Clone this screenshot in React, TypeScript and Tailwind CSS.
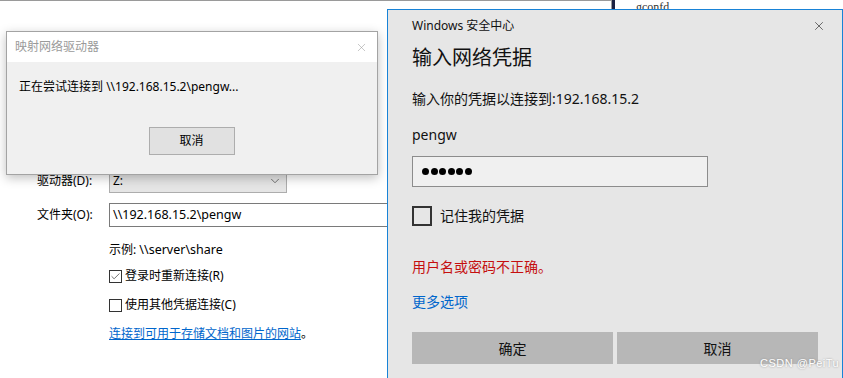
import { Check, ChevronDown, X } from 'lucide-react';

// --- background "map network drive" window ---
const DriveForm = () => (
  <div className="pl-[37px] pt-[158px]">
    <div className="grid grid-cols-[72px_auto] items-center gap-y-[10px]">
      <span className="leading-[16px]">驱动器(D):</span>
      <div className="w-[178px] h-[25px] bg-[#e5e5e5] border border-[#adadad] flex items-center justify-between pl-[3px] pr-[4px]">
        <span className="leading-[16px]">Z:</span>
        <ChevronDown size={14} strokeWidth={1.2} className="text-[#444]" />
      </div>
      <span className="leading-[16px]">文件夹(O):</span>
      <div className="w-[320px] h-[24px] bg-white border border-[#7a7a7a] flex items-center pl-[3px]">
        <span className="leading-[16px] text-[12.5px]">\\192.168.15.2\pengw</span>
      </div>
    </div>
    <div className="pl-[72px] flex flex-col">
      <div className="mt-[15px] leading-[16px]">示例: <span className="text-[12.5px]">\\server\share</span></div>
      <label className="mt-[10px] flex items-center gap-[3px] leading-[16px]">
        <span className="w-[13px] h-[13px] border border-[#333] bg-white flex items-center justify-center">
          <Check size={11} strokeWidth={1.5} className="text-[#333]" />
        </span>
        登录时重新连接(R)
      </label>
      <label className="mt-[13px] flex items-center gap-[3px] leading-[16px]">
        <span className="w-[13px] h-[13px] border border-[#333] bg-white" />
        使用其他凭据连接(C)
      </label>
      <div className="mt-[13px] leading-[16px]">
        <a className="text-[#0066cc] underline">连接到可用于存储文档和图片的网站</a>。
      </div>
    </div>
  </div>
);

// --- "connecting..." progress dialog ---
const ProgressDialog = () => (
  <div className="absolute left-[6px] top-[31px] w-[372px] h-[144px] border border-[#a3a3a3] bg-[#f0f0f0] shadow-[0_3px_10px_rgba(0,0,0,0.25)] flex flex-col">
    <div className="h-[30px] bg-white flex items-center justify-between pl-[8px] pr-[9px]">
      <span className="text-[#9a9a9a] leading-[16px]">映射网络驱动器</span>
      <X size={13} strokeWidth={1} className="text-[#999]" />
    </div>
    <div className="pl-[12px] pt-[17px] leading-[16px]">
      正在尝试连接到 <span className="text-[12px]">\\192.168.15.2\pengw...</span>
    </div>
    <div className="flex justify-center mt-[32px] pr-[1px]">
      <button className="w-[86px] h-[28px] bg-[#e1e1e1] border border-[#adadad] leading-[16px]">取消</button>
    </div>
  </div>
);

// --- Windows security credential dialog ---
const CredentialDialog = () => (
  <div className="absolute left-[387px] top-[9px] w-[456px] h-[380px] border border-[#1883d7] bg-[#e6e6e6] pl-[24px] flex flex-col">
    <div className="h-[32px] flex items-center justify-between pr-[16px]">
      <span className="leading-[16px] text-[#111]">Windows 安全中心</span>
      <X size={14} strokeWidth={1.1} className="text-[#222]" />
    </div>
    <div className="mt-[2px] text-[20px] leading-[28px] text-[#111]">输入网络凭据</div>
    <div className="mt-[17px] text-[14px] leading-[20px] text-[#111]">输入你的凭据以连接到:192.168.15.2</div>
    <div className="mt-[16px] text-[14px] leading-[20px] text-[#111]">pengw</div>
    <div className="mt-[11px] w-[296px] h-[31px] bg-[#f0f0f0] border border-[#8c8c8c] flex items-center gap-[1.5px] pl-[9px]">
      {[0, 1, 2, 3, 4, 5].map(i => (
        <span key={i} className="w-[7px] h-[7px] rounded-full bg-black" />
      ))}
    </div>
    <label className="mt-[19px] flex items-center gap-[8px] text-[14px] leading-[20px] text-[#111]">
      <span className="w-[20px] h-[20px] border-2 border-[#333]" />
      记住我的凭据
    </label>
    <div className="mt-[31px] text-[14px] leading-[20px] text-[#c50f0f]">用户名或密码不正确。</div>
    <div className="mt-[15px] text-[14px] leading-[20px] text-[#0066cc]">更多选项</div>
    <div className="mt-[20px] flex gap-[4px]">
      <button className="w-[201px] h-[32px] bg-[#b7b7b7] text-[14px] text-[#111]">确定</button>
      <button className="w-[201px] h-[32px] bg-[#b7b7b7] text-[14px] text-[#111]">取消</button>
    </div>
  </div>
);

export default function App() {
  return (
    <div className="relative w-[843px] h-[378px] overflow-hidden bg-white text-[12px] text-black font-['Noto_Sans','Noto_Sans_CJK_SC',sans-serif]">
      {/* strip of the windows behind */}
      <div className="flex h-[10px]">
        <div className="w-[612px] h-[10px] border-t border-r border-[#9a9a9a]" />
        <div className="w-[3px] h-[10px] bg-[#1c2142]" />
        <div className="pl-[21px] pt-[1px] text-[12px] leading-[12px] text-[#333] font-['Liberation_Serif',serif]">gconfd</div>
      </div>

      <DriveForm />
      <ProgressDialog />
      <CredentialDialog />

      <div className="absolute left-[760px] top-[356px] text-[11px] leading-[14px] tracking-[0.5px] text-white [text-shadow:0_0_2px_#888] font-['Liberation_Sans',sans-serif]">
        CSDN @PeiTu
      </div>
    </div>
  );
}
